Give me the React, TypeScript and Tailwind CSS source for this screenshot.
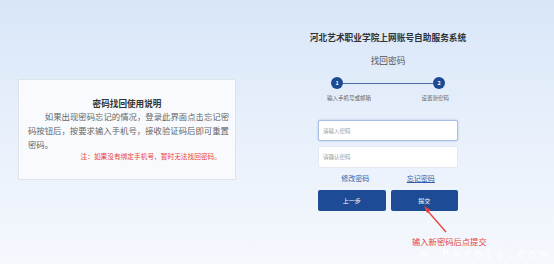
export default function App() {
  const cjk = { fontFamily: '"Noto Sans CJK SC", "Noto Sans", sans-serif' }

  return (
    <div
      className="relative flex h-[264px] w-[554px] overflow-hidden bg-gradient-to-b from-[#d8e6f8] via-[#e8f0fb] to-[#f5f8fd]"
      style={cjk}
    >
      {/* left: help box */}
      <div className="pl-[18px] pt-[79px]">
        <div className="h-[101px] w-[218px] border border-[#dfe4eb] bg-[#f8fafd] px-[9px] pt-[17px]">
          <h2 className="text-center text-[8.6px] font-bold leading-[12px] text-[#333]">
            密码找回使用说明
          </h2>
          <p className="whitespace-nowrap text-[8.4px] leading-[14px] text-[#666]">
            <span className="pl-[16.8px]">如果出现密码忘记的情况，登录此界面点击忘记密</span>
            <br />
            码按钮后，按要求输入手机号，接收验证码后即可重置
            <br />
            密码。
          </p>
          <p className="pr-[5px] text-right text-[6.7px] leading-[10px] text-[#e8413a]">
            注：如果没有绑定手机号，暂时无法找回密码。
          </p>
        </div>
      </div>

      {/* right: form */}
      <div className="relative ml-[72px] flex w-[160px] flex-col items-center pt-[32px]">
        <h1 className="whitespace-nowrap text-[8.7px] font-bold leading-[11px] text-[#333]">
          河北艺术职业学院上网账号自助服务系统
        </h1>
        <div className="mt-[11.5px] text-[8.7px] leading-[11px] text-[#555]">找回密码</div>

        <div className="mt-[11.5px] flex w-full items-center px-[23px]">
          <span className="flex h-[12px] w-[12px] items-center justify-center rounded-full bg-[#1d4a93] text-[5.5px] font-bold text-white">
            1
          </span>
          <span className="h-px flex-1 bg-[#4a6aa4]" />
          <span className="flex h-[12px] w-[12px] items-center justify-center rounded-full bg-[#1d4a93] text-[5.5px] font-bold text-white">
            2
          </span>
        </div>
        <div className="mt-[5px] flex w-full justify-between px-[19px] text-[5.5px] leading-[8px] text-[#666]">
          <span>输入手机号或邮箱</span>
          <span>设置新密码</span>
        </div>

        <div className="mt-[18px] flex w-[140px] flex-col gap-[5px]">
          <input
            placeholder="请输入密码"
            className="h-[21px] w-full rounded-[2px] border border-[#a9bfe2] bg-white px-[4px] text-[5.5px] shadow-[0_0_2px_rgba(80,120,190,0.45)] outline-none placeholder:text-[#999]"
          />
          <input
            placeholder="请确认密码"
            className="h-[22px] w-full rounded-[2px] border border-[#e4e9f0] bg-white px-[4px] text-[5.5px] outline-none placeholder:text-[#999]"
          />
        </div>

        <div className="mt-[5px] grid w-[140px] grid-cols-2 gap-[5px] text-[7px] leading-[10px] text-[#2d5ba6]">
          <a className="pl-[7px] text-center">修改密码</a>
          <a className="pr-[7px] text-center underline">忘记密码</a>
        </div>

        <div className="mt-[7px] grid w-[140px] grid-cols-2 gap-[5px]">
          <button className="h-[21px] rounded-[2px] bg-[#1d4b95] text-[6px] text-white">上一步</button>
          <button className="h-[21px] rounded-[2px] bg-[#1d4b95] text-[6px] text-white">提交</button>
        </div>

        {/* annotation arrow */}
        <svg className="absolute left-[110px] top-[203px]" width="30" height="32" viewBox="0 0 30 32">
          <line x1="28" y1="29" x2="8" y2="6" stroke="#e8413a" strokeWidth="1.3" />
          <polygon points="6,3 13,7 9,10" fill="#e8413a" />
        </svg>
        <div className="absolute left-[104px] top-[235px] whitespace-nowrap text-[8.3px] leading-[12px] text-[#e8413a]">
          输入新密码后点提交
        </div>
      </div>

      {/* watermark */}
      <div
        className="absolute left-[420px] top-[247px] whitespace-nowrap text-[13px] leading-[13px] tracking-[3px] text-white/80"
        style={{ fontFamily: '"DejaVu Sans Mono", monospace' }}
      >
        m.herots.com
      </div>
    </div>
  )
}
